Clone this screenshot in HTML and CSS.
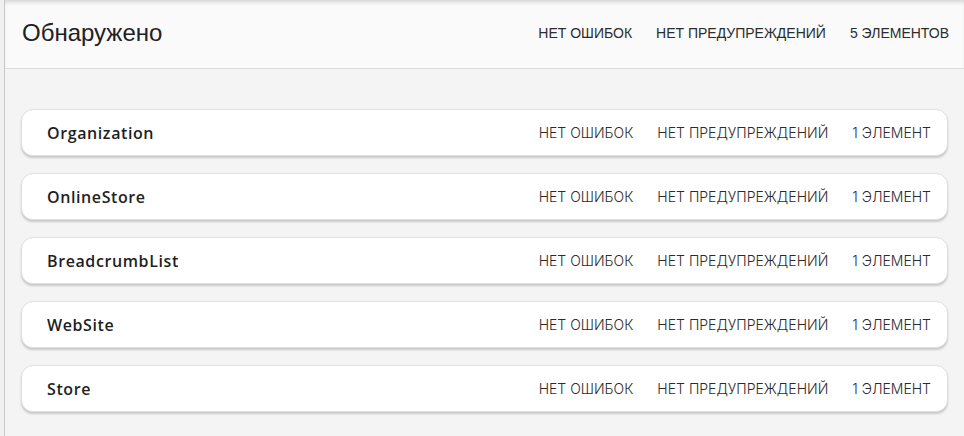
FILE: index.html
```html
<!DOCTYPE html>
<html lang="ru">
<head>
  <meta charset="UTF-8">
  <meta name="viewport" content="width=device-width, initial-scale=1.0">
  <title>Обнаружено</title>
  <link rel="stylesheet" href="styles.css">
</head>
<body>
  <div class="gutter"></div>
  <div class="panel">
    <div class="header">
      <h1>Обнаружено</h1>
      <div class="stats">
        <span>НЕТ ОШИБОК</span>
        <span>НЕТ ПРЕДУПРЕЖДЕНИЙ</span>
        <span>5 ЭЛЕМЕНТОВ</span>
      </div>
    </div>

    <div class="content">
      <div class="card">
        <div class="card-title">Organization</div>
        <div class="card-stats">
          <span>НЕТ ОШИБОК</span>
          <span>НЕТ ПРЕДУПРЕЖДЕНИЙ</span>
          <span>1 ЭЛЕМЕНТ</span>
        </div>
      </div>
      <div class="card">
        <div class="card-title">OnlineStore</div>
        <div class="card-stats">
          <span>НЕТ ОШИБОК</span>
          <span>НЕТ ПРЕДУПРЕЖДЕНИЙ</span>
          <span>1 ЭЛЕМЕНТ</span>
        </div>
      </div>
      <div class="card">
        <div class="card-title">BreadcrumbList</div>
        <div class="card-stats">
          <span>НЕТ ОШИБОК</span>
          <span>НЕТ ПРЕДУПРЕЖДЕНИЙ</span>
          <span>1 ЭЛЕМЕНТ</span>
        </div>
      </div>
      <div class="card">
        <div class="card-title">WebSite</div>
        <div class="card-stats">
          <span>НЕТ ОШИБОК</span>
          <span>НЕТ ПРЕДУПРЕЖДЕНИЙ</span>
          <span>1 ЭЛЕМЕНТ</span>
        </div>
      </div>
      <div class="card">
        <div class="card-title">Store</div>
        <div class="card-stats">
          <span>НЕТ ОШИБОК</span>
          <span>НЕТ ПРЕДУПРЕЖДЕНИЙ</span>
          <span>1 ЭЛЕМЕНТ</span>
        </div>
      </div>
    </div>
  </div>
</body>
</html>
```

FILE: styles.css
```css
html, body {
  margin: 0;
  padding: 0;
  height: 100%;
}

body {
  display: flex;
  background: #f1f1f1;
  font-family: 'Liberation Sans', Arial, sans-serif;
  color: #202124;
  overflow: hidden;
}

.gutter {
  width: 4px;
  background: #f0f0f0;
  border-right: 1px solid #c8c8c8;
  flex-shrink: 0;
}

.panel {
  flex: 1;
  background: #f4f4f4;
  box-shadow: inset 0 3px 3px -2px rgba(0, 0, 0, 0.18);
}

.header {
  display: flex;
  align-items: center;
  justify-content: space-between;
  height: 65px;
  padding: 0 15px 3px 17px;
  background: #fafafa;
  border-bottom: 1px solid #dcdcdc;
  box-shadow: inset 0 4px 4px -2px rgba(0, 0, 0, 0.16);
}

.header h1 {
  margin: 0;
  font-size: 24px;
  font-weight: 400;
  color: #202124;
}

.stats {
  display: flex;
  gap: 24px;
  font-size: 14px;
  color: #2c2c2c;
}

.content {
  display: flex;
  flex-direction: column;
  gap: 17px;
  padding: 40px 16px 0 16px;
}

.card {
  display: flex;
  align-items: center;
  justify-content: space-between;
  height: 45px;
  padding: 0 16px 0 25px;
  background: #fff;
  border: 1px solid #e0e0e0;
  border-radius: 12px;
  box-shadow: 0 2px 2px rgba(0, 0, 0, 0.18);
}

.card-title {
  font-family: 'Open Sans', 'Noto Sans', sans-serif;
  font-size: 16px;
  font-weight: 600;
  letter-spacing: 0.6px;
  color: #1f1f1f;
}

.card-stats {
  display: flex;
  gap: 24px;
  font-family: Inter, 'Noto Sans', sans-serif;
  font-size: 14px;
  font-weight: 300;
  color: #2b2b2b;
}
```
